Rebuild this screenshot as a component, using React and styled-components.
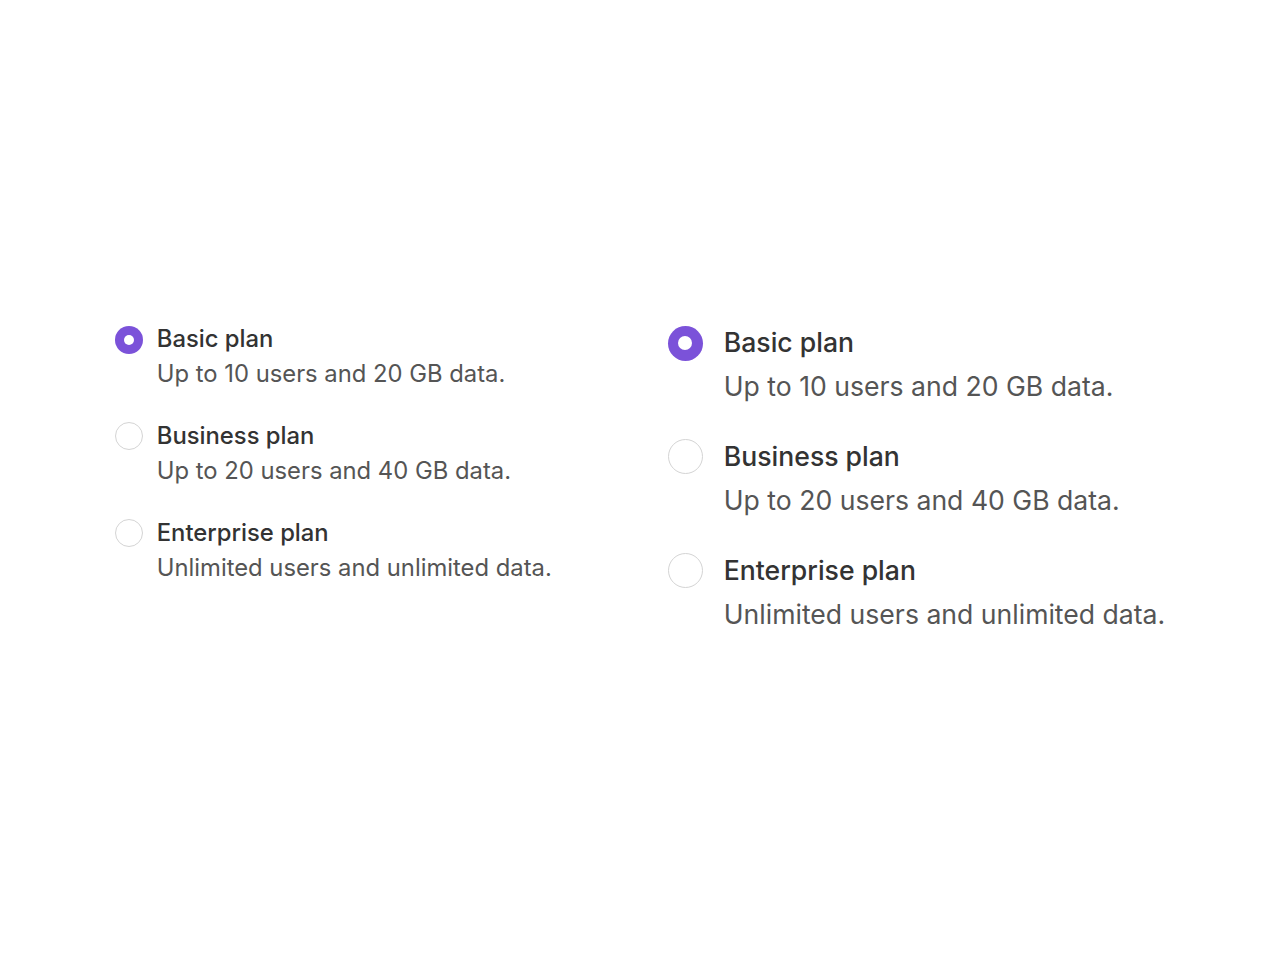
import React from 'react'
import styled, { createGlobalStyle } from 'styled-components'

const GlobalStyle = createGlobalStyle`
    html, body {
        margin: 0;
        padding: 0;
        background: #ffffff;
    }
    body {
        font-family: Inter, "Noto Sans", sans-serif;
        -webkit-font-smoothing: antialiased;
    }
`;

const Page = styled.div`
    box-sizing: border-box;
    width: 1280px;
    height: 960px;
    padding-bottom: 4px;
    display: flex;
    justify-content: center;
    align-items: center;
`;

const Columns = styled.div`
    display: flex;
    align-items: flex-start;
    gap: 116px;
`;

const Group = styled.div`
    display: flex;
    flex-direction: column;
    gap: ${p => p.$gap}px;
`;

const Option = styled.label`
    display: flex;
    align-items: flex-start;
    gap: ${p => p.$gap}px;
    cursor: pointer;
`;

const Radio = styled.span`
    flex: none;
    box-sizing: border-box;
    width: ${p => p.$size}px;
    height: ${p => p.$size}px;
    border-radius: 50%;
    display: flex;
    align-items: center;
    justify-content: center;
    background: ${p => (p.$checked ? '#7b52d9' : '#ffffff')};
    border: ${p => (p.$checked ? 'none' : '1.5px solid #d4d4d4')};
    &::after{
        content: '';
        display: ${p => (p.$checked ? 'block' : 'none')};
        width: ${p => p.$dot}px;
        height: ${p => p.$dot}px;
        border-radius: 50%;
        background: #ffffff;
    }
`;

const Text = styled.div`
    display: flex;
    flex-direction: column;
    gap: ${p => p.$gap}px;
    margin-top: ${p => (p.$radio - p.$size * 1.2) / 2}px;
`;

const Title = styled.span`
    font-size: ${p => p.$size}px;
    line-height: 1.2;
    font-weight: 500;
    color: #333333;
    white-space: nowrap;
`;

const Description = styled.span`
    font-size: ${p => p.$size}px;
    line-height: 1.2;
    font-weight: 400;
    color: #555555;
    white-space: nowrap;
`;

const plans = [
    { title: 'Basic plan', description: 'Up to 10 users and 20 GB data.', checked: true },
    { title: 'Business plan', description: 'Up to 20 users and 40 GB data.' },
    { title: 'Enterprise plan', description: 'Unlimited users and unlimited data.' },
];

const sizes = {
    md: { radio: 28, dot: 10, font: 23.8, textGap: 6, rowGap: 34, labelGap: 14 },
    lg: { radio: 35, dot: 14, font: 26.6, textGap: 12, rowGap: 36.4, labelGap: 21 },
};

const PlanGroup = ({ size }) => {
    const s = sizes[size]
    return(
        <Group $gap={s.rowGap}>
            {plans.map(plan => (
                <Option key={plan.title} $gap={s.labelGap}>
                    <Radio $size={s.radio} $dot={s.dot} $checked={plan.checked} />
                    <Text $gap={s.textGap} $radio={s.radio} $size={s.font}>
                        <Title $size={s.font}>{plan.title}</Title>
                        <Description $size={s.font}>{plan.description}</Description>
                    </Text>
                </Option>
            ))}
        </Group>
    )
}

const App = () => {
    return(
        <>
            <GlobalStyle />
            <Page>
                <Columns>
                    <PlanGroup size="md" />
                    <PlanGroup size="lg" />
                </Columns>
            </Page>
        </>
    )
}

export default App
